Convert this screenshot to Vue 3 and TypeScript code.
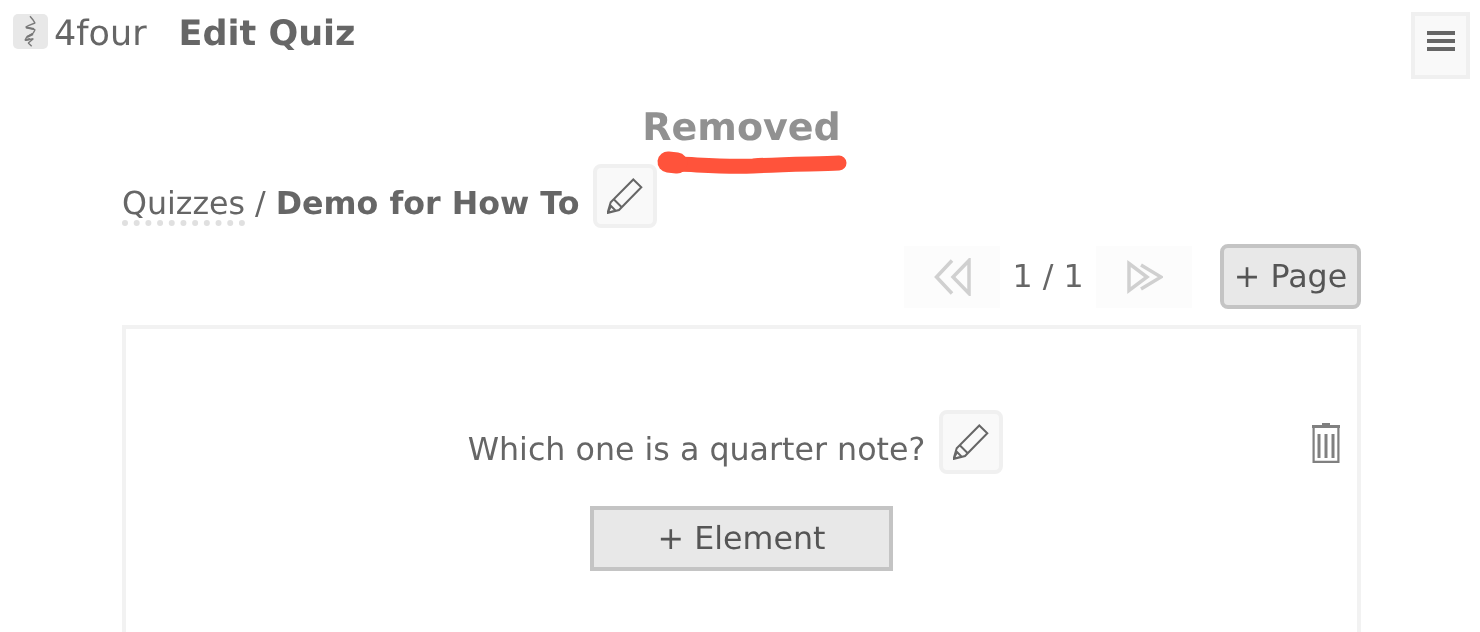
<template>
  <div class="page">
    <header class="top-bar">
      <div class="brand">
        <span class="logo">
          <svg width="35" height="35" viewBox="0 0 35 35">
            <path d="M17 2.3 L20.3 6.3 L22 9 L16 11.3 L12.7 13 L22 15.7 L20.3 19 L13.7 23 L12 26.3 L20.3 24.7 L15.3 29 L18.7 32.3" fill="none" stroke="#666" stroke-width="1.4" stroke-linejoin="bevel" opacity=".85" />
            <path d="M13 13.5 L21 15 M14 23 L20 20 M12.5 26 L17 25" fill="none" stroke="#777" stroke-width="2" />
          </svg>
        </span>
        <span class="brand-name">4four</span>
        <h1 class="page-title">Edit Quiz</h1>
      </div>
      <button class="menu-btn" aria-label="Menu">
        <span></span><span></span><span></span>
      </button>
    </header>

    <main class="content">
      <div class="removed">
        <span class="removed-text">Removed</span>
        <svg class="scribble" width="200" height="34" viewBox="0 0 200 34">
          <path d="M26 17 C50 18 70 20 100 19 C130 17 165 17 186 16" fill="none" stroke="#ff533b" stroke-width="15" stroke-linecap="round" />
          <path d="M15 15 L24 16" fill="none" stroke="#ff533b" stroke-width="21" stroke-linecap="round" />
        </svg>
      </div>

      <div class="crumbs">
        <a class="crumb-link">Quizzes</a>
        <span class="crumb-sep">/</span>
        <strong class="crumb-current">{{ quizName }}</strong>
        <button class="edit-btn" aria-label="Edit name">
          <svg width="36" height="36" viewBox="0 0 36 36"><path :d="pencil" class="pencil" /></svg>
        </button>
      </div>

      <div class="pager">
        <button class="nav-btn nav-prev" aria-label="Previous page">
          <svg width="38" height="38" viewBox="0 0 38 38">
            <path d="M19 2.5 L3.5 19 L19 35.5 M36 2.5 L20 19 L36 35.5 Z" class="arrow" />
          </svg>
        </button>
        <span class="page-count">{{ currentPage }} / {{ totalPages }}</span>
        <button class="nav-btn nav-next" aria-label="Next page">
          <svg width="38" height="38" viewBox="0 0 38 38">
            <path d="M4 5.5 L22 19 L4 32.5 Z M16 7 L36 19 L16 31" class="arrow" />
          </svg>
        </button>
        <button class="add-page">+ Page</button>
      </div>

      <section class="card">
        <div class="question-row">
          <span class="question">{{ question }}</span>
          <button class="edit-btn" aria-label="Edit question">
            <svg width="36" height="36" viewBox="0 0 36 36"><path :d="pencil" class="pencil" /></svg>
          </button>
          <button class="trash-btn" aria-label="Delete">
            <svg width="28" height="40" viewBox="0 0 28 40" fill="#808080">
              <path d="M10 0 H18 V2 H28 V5 H0 V2 H10 Z" />
              <path d="M0.5 5 H2.7 V37.8 H25.3 V5 H27.5 V40 H0.5 Z" />
              <rect x="5.5" y="11" width="3" height="24" />
              <rect x="12.5" y="11" width="3" height="24" />
              <rect x="19.5" y="11" width="3" height="24" />
            </svg>
          </button>
        </div>
        <button class="add-element">+ Element</button>
      </section>
    </main>
  </div>
</template>

<script setup lang="ts">
const quizName = 'Demo for How To'
const question = 'Which one is a quarter note?'
const currentPage = 1
const totalPages = 1

// same pencil is used in both edit buttons
const pencil = 'M0.5 35 L3.7 24.3 L26.3 1.5 L34.3 9.3 L12 32 Z M0.5 35 L4 28 L8.5 32.5 Z M6.5 21 L15 29.5'
</script>

<style>
html,
body {
  background: #fff;
  overflow: hidden;
}
</style>

<style scoped>
.page {
  height: 632px;
  overflow: hidden;
  font-family: "DejaVu Sans", sans-serif;
  text-rendering: geometricPrecision;
  color: #666;
  will-change: transform;
}

.top-bar {
  display: flex;
  justify-content: space-between;
  align-items: flex-start;
  padding: 12px 10px 0 13px;
}

.brand {
  display: flex;
  align-items: center;
  height: 42px;
}

.logo {
  width: 35px;
  height: 35px;
  border-radius: 5px;
  background: #e8e8e8;
  display: block;
  margin-bottom: 4px;
}

.logo svg {
  display: block;
}

.brand-name {
  margin-left: 6px;
  margin-top: 2px;
  font-size: 35px;
  color: #666;
}

.page-title {
  margin: 2px 0 0 32px;
  font-size: 35px;
  font-weight: 700;
  color: #666;
}

.menu-btn {
  box-sizing: border-box;
  width: 59px;
  height: 67px;
  padding: 0 0 9px;
  background: #f9f9f9;
  border: 4px solid #f0f0f0;
  display: flex;
  flex-direction: column;
  align-items: center;
  justify-content: center;
  gap: 4px;
}

.menu-btn span {
  display: block;
  width: 28px;
  height: 4px;
  background: #666;
}

.content {
  padding: 0 119px 0 122px;
}

.removed {
  position: relative;
  margin-top: 23px;
  text-align: center;
  height: 62px;
}

.removed-text {
  font-size: 38px;
  font-weight: 700;
  line-height: 50px;
  color: #919191;
}

.scribble {
  position: absolute;
  left: 531px;
  top: 45px;
}

.crumbs {
  display: flex;
  align-items: flex-start;
  font-size: 31.7px;
  height: 64px;
}

.crumb-link {
  color: #666;
  margin-top: 24px;
  line-height: 32px;
  border-bottom: 6px dotted #e0e0e0;
}

.crumb-sep,
.crumb-current {
  margin-top: 24px;
  line-height: 32px;
}

.crumb-sep {
  margin-left: 10px;
  margin-right: 10px;
}

.crumb-current {
  color: #666;
}

.edit-btn {
  box-sizing: border-box;
  width: 64px;
  height: 64px;
  padding: 0;
  margin-left: 14px;
  background: #f9f9f9;
  border: 4px solid #f0f0f0;
  border-radius: 8px;
  display: flex;
  align-items: center;
  justify-content: center;
}

.pencil {
  fill: none;
  stroke: #666;
  stroke-width: 2;
  stroke-linejoin: miter;
}

.pager {
  display: flex;
  justify-content: flex-end;
  align-items: center;
  margin-top: 16px;
  height: 65px;
}

.nav-btn {
  box-sizing: border-box;
  width: 96px;
  height: 62px;
  padding: 0;
  border: none;
  background: #fcfcfc;
  display: flex;
  align-items: center;
  justify-content: center;
}

.arrow {
  fill: none;
  stroke: #d0d0d0;
  stroke-width: 3.5;
}

.page-count {
  width: 96px;
  text-align: center;
  font-size: 31.7px;
  color: #666;
}

.add-page {
  box-sizing: border-box;
  width: 141px;
  height: 65px;
  margin-left: 28px;
  padding: 0;
  font-family: inherit;
  font-size: 31.7px;
  text-rendering: geometricPrecision;
  color: #555;
  background: #e8e8e8;
  border: 4px solid #c4c4c4;
  border-radius: 8px;
}

.card {
  box-sizing: border-box;
  margin-top: 16px;
  height: 400px;
  border: 4px solid #f2f2f2;
  display: flex;
  flex-direction: column;
  align-items: center;
}

.question-row {
  position: relative;
  box-sizing: border-box;
  align-self: stretch;
  display: flex;
  justify-content: center;
  align-items: flex-start;
  margin-top: 81px;
  padding-right: 12px;
  height: 64px;
  font-size: 31.7px;
  color: #666;
}

.question {
  margin-top: 24px;
  line-height: 32px;
}

.trash-btn {
  position: absolute;
  right: 17px;
  top: 13px;
  padding: 0;
  border: none;
  background: none;
}

.trash-btn svg {
  display: block;
}

.add-element {
  box-sizing: border-box;
  width: 303px;
  height: 65px;
  margin-top: 32px;
  padding: 0;
  font-family: inherit;
  font-size: 31.7px;
  text-rendering: geometricPrecision;
  color: #555;
  background: #e8e8e8;
  border: 4px solid #c4c4c4;
}
</style>
